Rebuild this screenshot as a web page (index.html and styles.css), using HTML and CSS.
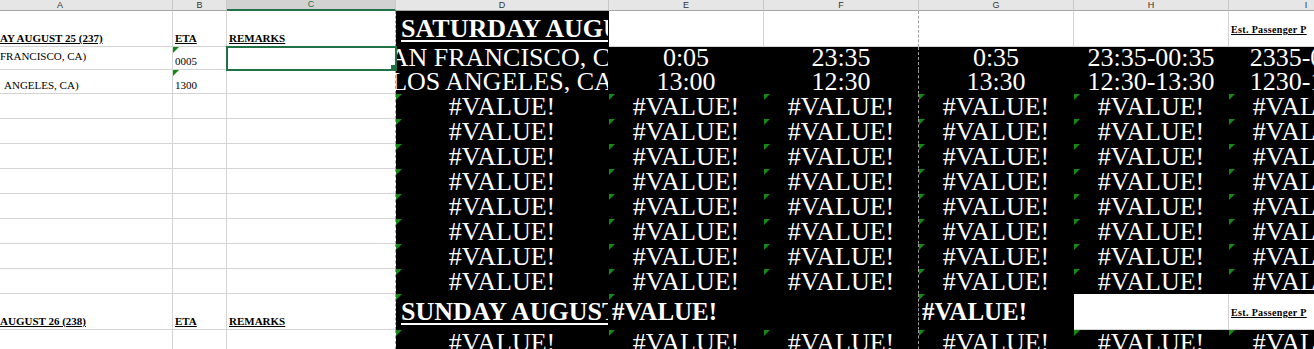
FILE: index.html
```html
<!DOCTYPE html>
<html lang="en">
<head>
  <meta charset="UTF-8">
  <meta name="viewport" content="width=device-width, initial-scale=1.0">
  <title>Flight Schedule</title>
  <link rel="stylesheet" href="styles.css">
</head>
<body>
  <div class="sheet">
    <div class="row r-head">
      <div class="hd hd-first">A</div>
      <div class="hd">B</div>
      <div class="hd hd-sel">C</div>
      <div class="hd">D</div>
      <div class="hd">E</div>
      <div class="hd">F</div>
      <div class="hd">G</div>
      <div class="hd">H</div>
      <div class="hd">I</div>
    </div>

    <div class="row r-title">
      <div class="cell"><span class="lbl">AY AUGUST 25 (237)</span></div>
      <div class="cell pad"><span class="lbl">ETA</span></div>
      <div class="cell pad brk"><span class="lbl">REMARKS</span></div>
      <div class="cell dark title"><span>SATURDAY AUGUST 25</span></div>
      <div class="cell"></div>
      <div class="cell brk"></div>
      <div class="cell"></div>
      <div class="cell"></div>
      <div class="cell note"><span>Est. Passenger P</span></div>
    </div>

    <div class="row r-city">
      <div class="cell city-a">FRANCISCO, CA)</div>
      <div class="cell pad err">0005</div>
      <div class="cell brk sel"><span class="handle"></span></div>
      <div class="cell dark big">SAN FRANCISCO, CA</div>
      <div class="cell dark big">0:05</div>
      <div class="cell dark big brk">23:35</div>
      <div class="cell dark big">0:35</div>
      <div class="cell dark big">23:35-00:35</div>
      <div class="cell dark big">2335-0035</div>
    </div>

    <div class="row r-city2">
      <div class="cell indent">ANGELES, CA)</div>
      <div class="cell pad err">1300</div>
      <div class="cell brk"></div>
      <div class="cell dark big">LOS ANGELES, CA</div>
      <div class="cell dark big">13:00</div>
      <div class="cell dark big brk">12:30</div>
      <div class="cell dark big">13:30</div>
      <div class="cell dark big">12:30-13:30</div>
      <div class="cell dark big">1230-1330</div>
    </div>

    <div class="row r-val">
      <div class="cell"></div><div class="cell"></div><div class="cell brk"></div>
      <div class="cell dark big err">#VALUE!</div>
      <div class="cell dark big err">#VALUE!</div>
      <div class="cell dark big err brk">#VALUE!</div>
      <div class="cell dark big err">#VALUE!</div>
      <div class="cell dark big err">#VALUE!</div>
      <div class="cell dark big err">#VALUE!</div>
    </div>
    <div class="row r-val">
      <div class="cell"></div><div class="cell"></div><div class="cell brk"></div>
      <div class="cell dark big err">#VALUE!</div>
      <div class="cell dark big err">#VALUE!</div>
      <div class="cell dark big err brk">#VALUE!</div>
      <div class="cell dark big err">#VALUE!</div>
      <div class="cell dark big err">#VALUE!</div>
      <div class="cell dark big err">#VALUE!</div>
    </div>
    <div class="row r-val">
      <div class="cell"></div><div class="cell"></div><div class="cell brk"></div>
      <div class="cell dark big err">#VALUE!</div>
      <div class="cell dark big err">#VALUE!</div>
      <div class="cell dark big err brk">#VALUE!</div>
      <div class="cell dark big err">#VALUE!</div>
      <div class="cell dark big err">#VALUE!</div>
      <div class="cell dark big err">#VALUE!</div>
    </div>
    <div class="row r-val">
      <div class="cell"></div><div class="cell"></div><div class="cell brk"></div>
      <div class="cell dark big err">#VALUE!</div>
      <div class="cell dark big err">#VALUE!</div>
      <div class="cell dark big err brk">#VALUE!</div>
      <div class="cell dark big err">#VALUE!</div>
      <div class="cell dark big err">#VALUE!</div>
      <div class="cell dark big err">#VALUE!</div>
    </div>
    <div class="row r-val">
      <div class="cell"></div><div class="cell"></div><div class="cell brk"></div>
      <div class="cell dark big err">#VALUE!</div>
      <div class="cell dark big err">#VALUE!</div>
      <div class="cell dark big err brk">#VALUE!</div>
      <div class="cell dark big err">#VALUE!</div>
      <div class="cell dark big err">#VALUE!</div>
      <div class="cell dark big err">#VALUE!</div>
    </div>
    <div class="row r-val">
      <div class="cell"></div><div class="cell"></div><div class="cell brk"></div>
      <div class="cell dark big err">#VALUE!</div>
      <div class="cell dark big err">#VALUE!</div>
      <div class="cell dark big err brk">#VALUE!</div>
      <div class="cell dark big err">#VALUE!</div>
      <div class="cell dark big err">#VALUE!</div>
      <div class="cell dark big err">#VALUE!</div>
    </div>
    <div class="row r-val">
      <div class="cell"></div><div class="cell"></div><div class="cell brk"></div>
      <div class="cell dark big err">#VALUE!</div>
      <div class="cell dark big err">#VALUE!</div>
      <div class="cell dark big err brk">#VALUE!</div>
      <div class="cell dark big err">#VALUE!</div>
      <div class="cell dark big err">#VALUE!</div>
      <div class="cell dark big err">#VALUE!</div>
    </div>
    <div class="row r-val">
      <div class="cell"></div><div class="cell"></div><div class="cell brk"></div>
      <div class="cell dark big err">#VALUE!</div>
      <div class="cell dark big err">#VALUE!</div>
      <div class="cell dark big err brk">#VALUE!</div>
      <div class="cell dark big err">#VALUE!</div>
      <div class="cell dark big err">#VALUE!</div>
      <div class="cell dark big err">#VALUE!</div>
    </div>

    <div class="row r-title">
      <div class="cell"><span class="lbl">AUGUST 26 (238)</span></div>
      <div class="cell pad"><span class="lbl">ETA</span></div>
      <div class="cell pad brk"><span class="lbl">REMARKS</span></div>
      <div class="cell dark title err"><span>SUNDAY AUGUST 26</span></div>
      <div class="cell dark total err">#VALUE!</div>
      <div class="cell dark brk"></div>
      <div class="cell dark total err">#VALUE!</div>
      <div class="cell"></div>
      <div class="cell note"><span>Est. Passenger P</span></div>
    </div>

    <div class="row r-val">
      <div class="cell"></div><div class="cell"></div><div class="cell brk"></div>
      <div class="cell dark big err">#VALUE!</div>
      <div class="cell dark big err">#VALUE!</div>
      <div class="cell dark big err brk">#VALUE!</div>
      <div class="cell dark big err">#VALUE!</div>
      <div class="cell dark big err">#VALUE!</div>
      <div class="cell dark big err">#VALUE!</div>
    </div>
  </div>
</body>
</html>
```

FILE: styles.css
```css
body {
  margin: 0;
  overflow: hidden;
  background: #fff;
  font-family: "Liberation Serif", "Times New Roman", serif;
}
.sheet {
  width: 1314px;
  overflow: hidden;
}
.row {
  display: grid;
  grid-template-columns: 173px 54px 169px 213px 155px 155px 155px 155px 155px;
}
.r-head { height: 11px; }
.r-title { height: 36px; }
.r-city { height: 23px; }
.r-city2 { height: 24px; }
.r-val { height: 25px; }

/* column letters */
.hd {
  box-sizing: border-box;
  font-family: "Liberation Sans", Arial, sans-serif;
  font-size: 9px;
  line-height: 10px;
  text-align: center;
  color: #333;
  background: #e6e6e6;
  border-right: 1px solid #c8c8c8;
  border-bottom: 1px solid #a6a6a6;
}
.hd-first {
  padding-right: 52px;
}
.hd-sel {
  background: #d2d2d2;
  color: #217346;
  line-height: 9px;
  border-bottom: 2px solid #217346;
}

/* cells */
.cell {
  position: relative;
  box-sizing: border-box;
  display: flex;
  align-items: flex-end;
  overflow: hidden;
  white-space: nowrap;
  border-right: 1px solid #d4d4d4;
  border-bottom: 1px solid #d4d4d4;
  font-size: 11px;
  line-height: 15px;
  color: #000;
}
.pad {
  padding-left: 2px;
}
.indent {
  padding-left: 4px;
}
.city-a {
  padding-bottom: 5px;
}
.lbl {
  font-weight: bold;
  text-decoration: underline;
}
.dark {
  background: #000;
  color: #fff;
  border-color: #000;
}
.brk {
  border-right: 1px dashed #a0a0a0;
}
.big {
  font-size: 26px;
  line-height: 23px;
  justify-content: center;
}
.title {
  font-size: 26px;
  line-height: 25px;
  font-weight: bold;
  align-items: center;
  padding-left: 5px;
}
.title span {
  text-decoration: underline;
  text-decoration-thickness: 2px;
  text-underline-offset: 3px;
}
.total {
  font-size: 25px;
  line-height: 25px;
  font-weight: bold;
  align-items: center;
  padding-left: 3px;
}
.note {
  font-size: 10px;
  font-weight: bold;
  letter-spacing: 0.35px;
  align-items: center;
  padding: 2px 0 0 2px;
}
.note span {
  text-decoration: underline;
}

/* error marker in the corner */
.err::before {
  content: "";
  position: absolute;
  top: 0;
  left: 0;
  border-top: 6px solid #138a13;
  border-right: 6px solid transparent;
}

/* active cell */
.sel {
  overflow: visible;
  z-index: 2;
  outline: 2px solid #217346;
  outline-offset: -1px;
}
.handle {
  position: absolute;
  right: -1px;
  bottom: -1px;
  width: 5px;
  height: 5px;
  background: #217346;
}
```
